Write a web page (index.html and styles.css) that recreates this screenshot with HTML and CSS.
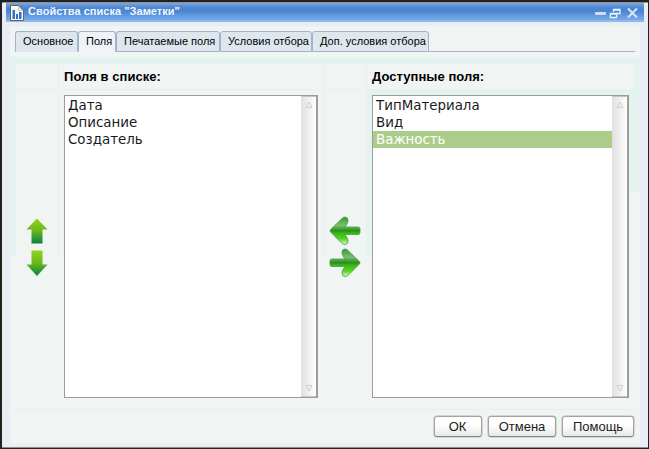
FILE: index.html
```html
<!DOCTYPE html>
<html lang="ru">
<head>
<meta charset="utf-8">
<title>Свойства списка "Заметки"</title>
<link rel="stylesheet" href="styles.css">
</head>
<body>
<div class="window">
  <header class="titlebar">
    <svg class="app-icon" width="14" height="16" viewBox="0 0 14 16"><path d="M.5.5h8l5 5v10H.5z" fill="#fafafa" stroke="#66645f"/><path d="M8.500 1v4.500h4.500" fill="#ddd" stroke="#ccc"/><path d="M2.500 5h2.500v9H2.500zM6 9h2v5H6zM9 7h2.500v7H9z" fill="#2f72c4"/></svg>
    <h1>Свойства списка "Заметки"</h1>
    <svg class="controls" width="46" height="14" viewBox="0 0 46 14"><rect x="1" y="7" width="11" height="3" rx="1" fill="#d6dbf1"/><path d="M19.500 7V4.500h6.500v4h-3M19 5h7" fill="none" stroke="#e8f4ff" stroke-width="1.300"/><path d="M16.500 8.500h6v4h-6zM16.500 9h6" fill="#5585c3" stroke="#e8f4ff" stroke-width="1.300"/><path d="M34 3.500l9 9M43 3.500l-9 9" stroke="#dfe2f5" stroke-width="2"/></svg>
  </header>
  <main class="content">
    <nav class="tabs">
      <span class="tab t1">Основное</span><span class="tab t2 active">Поля</span><span class="tab t3">Печатаемые поля</span><span class="tab t4">Условия отбора</span><span class="tab t5">Доп. условия отбора</span><span class="rest"></span>
    </nav>
    <section class="fields">
      <div class="head"></div>
      <div class="head">Поля в списке:</div>
      <div class="head"></div>
      <div class="head">Доступные поля:</div>
      <div class="cell arrows">
        <svg width="22" height="26" viewBox="0 0 22 26"><defs><linearGradient id="up" x2="0" y2="1"><stop stop-color="#91d51a"/><stop offset=".5" stop-color="#69b71c"/><stop offset="1" stop-color="#068243"/></linearGradient></defs><path d="M11 .5L21.500 11.500H16.500V25.500H5.500V11.500H.5z" fill="url(#up)"/></svg>
        <svg width="22" height="26" viewBox="0 0 22 26"><path d="M5.500.5H16.500V14.500H21.500L11 26 .5 14.500H5.500z" fill="url(#up)"/></svg>
      </div>
      <div class="cell">
        <div class="list">
          <ul><li>Дата</li><li>Описание</li><li>Создатель</li></ul>
          <div class="scroll"><svg width="8" height="8" viewBox="0 0 8 8"><path d="M4 1L7 6.500H1z"/></svg><svg width="8" height="8" viewBox="0 0 8 8"><path d="M1 1.500h6L4 7z"/></svg></div>
        </div>
      </div>
      <div class="cell arrows sides">
        <svg width="32" height="30" viewBox="0 0 32 30"><defs><linearGradient id="left" x2="0" y2="1"><stop stop-color="#2f9a38"/><stop offset=".3" stop-color="#7cbf72"/><stop offset=".5" stop-color="#258f1c"/><stop offset=".58" stop-color="#37b512"/><stop offset=".8" stop-color="#55d426"/><stop offset="1" stop-color="#d4ffc4"/></linearGradient></defs><path id="arrow" d="M1.600 13.500L12.500 3Q14 1 16 1Q19 1.200 19 4.500Q19 6 18.200 7.500L16.200 11H29Q31 11 31 13V16.500Q31 18.500 29 18.500H16L18.200 22Q19 23.500 19 25Q19 28.500 16 28.500Q13.500 28.500 12 26.500L1.600 16Q.4 14.700 1.600 13.500z" fill="url(#left)" stroke="#4a9c40" stroke-width=".8"/></svg>
        <svg width="32" height="30" viewBox="0 0 32 30"><use href="#arrow" transform="translate(32 0) scale(-1 1)"/></svg>
      </div>
      <div class="cell last">
        <div class="list">
          <ul><li>ТипМатериала</li><li>Вид</li><li class="selected">Важность</li></ul>
          <div class="scroll"><svg width="8" height="8" viewBox="0 0 8 8"><path d="M4 1L7 6.500H1z"/></svg><svg width="8" height="8" viewBox="0 0 8 8"><path d="M1 1.500h6L4 7z"/></svg></div>
        </div>
      </div>
    </section>
    <footer class="actions">
      <button class="ok">ОК</button><button class="cancel">Отмена</button><button class="help">Помощь</button>
    </footer>
  </main>
</div>
</body>
</html>
```
FILE: styles.css
```css
* { box-sizing: border-box; }
body {
  margin: 0;
  width: 649px;
  height: 449px;
  background: #222;
  padding: 2px 1px 1px 2px;
  font-family: "Liberation Sans", Arial, sans-serif;
  color: #000;
  overflow: hidden;
}
.window {
  height: 446px;
  background: #e9edf4;
  border-top: 1px solid #918f8b;
  border-bottom: 1px solid #918f8b;
  padding: 0 8px 4px;
}
.titlebar {
  margin: 0 -4px 4px;
  height: 19px;
  display: flex;
  align-items: flex-start;
  background: linear-gradient(#80a9e0 0, #5a8fd5 3px, #4a84cf 6px, #4c88d4 9px, #6aa0e4 14px, #78a9e8 17px, #8db8f0 17px);
}
.app-icon { margin: 2px 4px 0; flex: none; }
.titlebar h1 {
  margin: 2px 0 0;
  font-size: 11px;
  line-height: 13px;
  letter-spacing: .04px;
  color: #f2f6ff;
}
.controls { margin: 2px 4px 0 auto; }
.content {
  height: 417px;
  width: 630px;
  background: #f0f4f3;
  display: flex;
  flex-direction: column;
}
.tabs {
  height: 31px;
  padding: 5px 5px 0;
  display: flex;
  flex: none;
}
.tab {
  height: 21px;
  padding: 3px 0 0 7px;
  border: 1px solid #a5b0cb;
  border-radius: 3px 3px 0 0;
  background: #dfe7ee;
  font-size: 11px;
  line-height: 13px;
  white-space: nowrap;
}
.tab.active { background: #eff3f7; border-bottom-color: #eff3f7; }
.t1 { width: 63px; border-bottom-color: #dfe7ee; }
.t2 { width: 38px; }
.t3 { width: 104px; }
.t4 { width: 92px; }
.t5 { width: 117px; }
.rest { flex: 1; height: 21px; border-bottom: 1px solid #a5b0cb; }
.fields {
  height: 352px;
  flex: none;
  display: grid;
  grid-template-columns: 42px 264px 42px 267px;
  grid-template-rows: 25px 319px;
  gap: 1px;
  padding: 7px 6px 0;
  background:
    linear-gradient(#e4f3ef, #e4f3ef) 0 0 / 368px 199px no-repeat,
    linear-gradient(#e4f3ef, #e4f3ef) 100% 0 / 273px 135px no-repeat;
}
.head {
  background: #f0f4f3;
  padding: 5px 0 0 5px;
  font-size: 13px;
  line-height: 15px;
  letter-spacing: .04px;
  font-weight: bold;
}
.cell { background: #f0f4f3; padding: 5px; }
.last { background: none; }
.list {
  height: 303px;
  width: 254px;
  display: flex;
  border: 1px solid #9c9c9c;
  border-right: 2px solid #9f9e94;
  background: #fff;
}
.last .list { width: 257px; }
.list ul {
  flex: 1;
  list-style: none;
  margin: 0;
  padding: 1px 0 0;
  font: 13.4px/17px "DejaVu Sans", sans-serif;
  color: #1a1a1a;
}
.list li { height: 17px; padding-left: 3px; }
.list .selected { background: #accd8a; color: #fff; }
.scroll {
  width: 15px;
  border-top: 1px solid #c9c7bd;
  border-bottom: 1px solid #c9c7bd;
  background: linear-gradient(90deg, #e0e0e0, #f8f8f8 80%, #fff);
  padding: 4px 0 4px 4px;
  display: flex;
  flex-direction: column;
  justify-content: space-between;
}
.scroll path { fill: none; stroke: #d0d0d0; }
.arrows {
  padding: 128px 0 0 10px;
  display: flex;
  flex-direction: column;
  gap: 6px;
}
.sides { padding: 126px 0 0 5px; gap: 2px; }
.arrows svg { flex: none; }
.actions {
  flex: 1;
  border-top: 1px solid #e9eff0;
  padding: 6px 6px 0 0;
  display: flex;
  justify-content: flex-end;
  align-items: flex-start;
  gap: 6px;
}
button {
  height: 21px;
  padding: 0;
  border: 1px solid #a3a3a3;
  border-bottom-color: #858585;
  border-radius: 3px;
  background: linear-gradient(#fff 40%, #e8e8e8);
  box-shadow: 0 0 0 .5px #b8b8b8;
  font: 13px/17px "Liberation Sans", Arial, sans-serif;
  color: #1c1c1c;
}
.ok { width: 48px; padding-right: 1px; }
.cancel { width: 68px; }
.help { width: 72px; }
```
